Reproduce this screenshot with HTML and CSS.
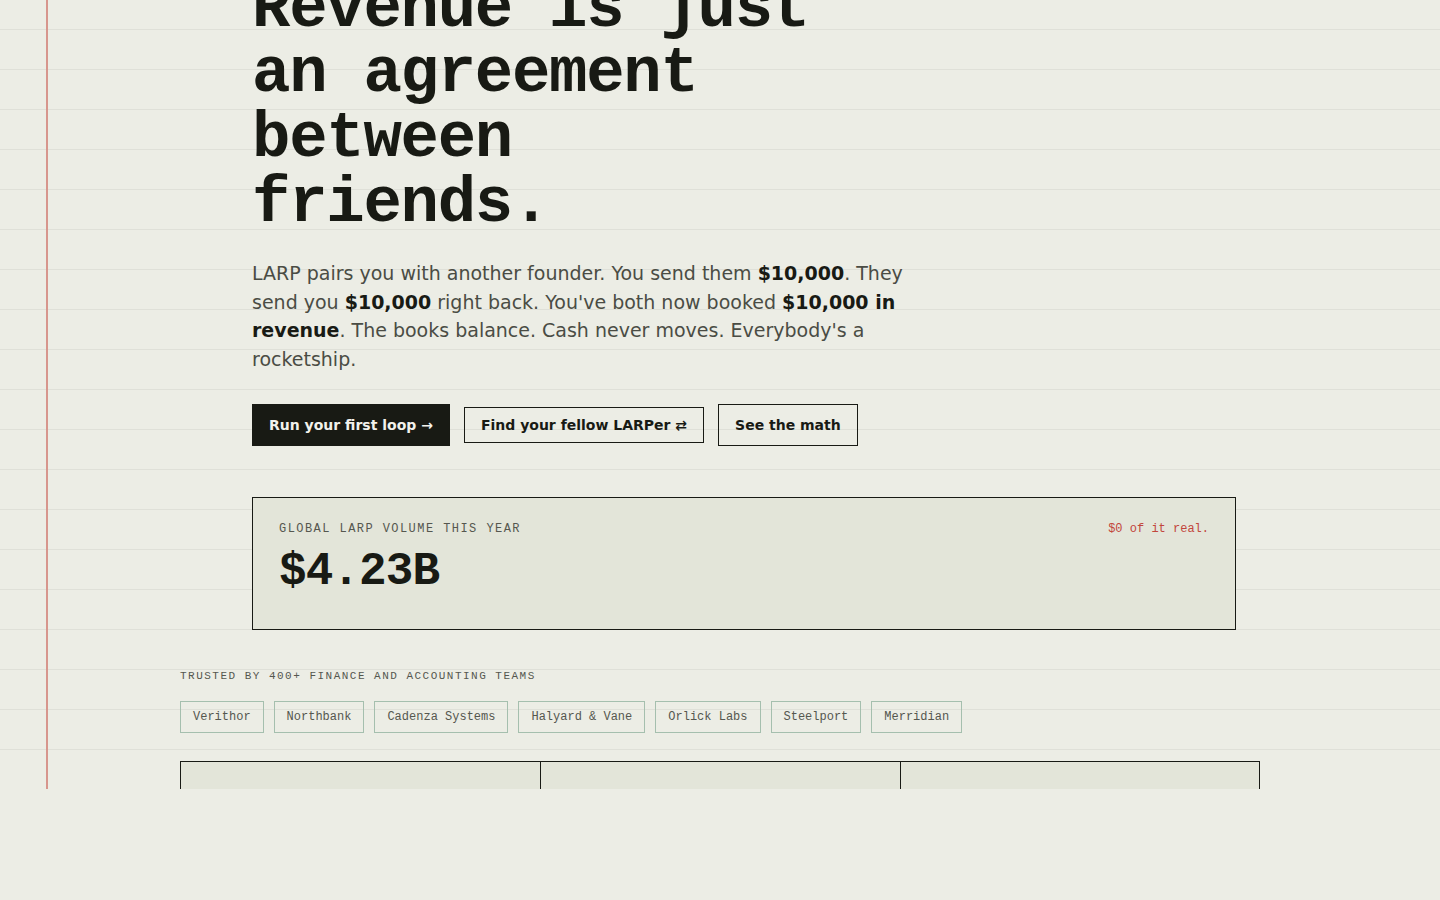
FILE: index.html
```html
<!DOCTYPE html>
<html lang="en">
<head>
    <meta charset="UTF-8">
    <meta name="viewport" content="width=device-width, initial-scale=1.0">
    <title>LARP — Revenue is just an agreement between friends</title>
    <link rel="stylesheet" href="styles.css">
</head>
<body>
    <div class="sheet">
        <main class="wrap">
            <section class="hero">
                <h1 class="headline">Revenue is just an agreement between friends.</h1>
                <p class="lede">
                    LARP pairs you with another founder. You send them <strong>$10,000</strong>. They
                    send you <strong>$10,000</strong> right back. You've both now booked <strong>$10,000 in
                    revenue</strong>. The books balance. Cash never moves. Everybody's a rocketship.
                </p>

                <div class="actions">
                    <button class="btn btn-primary">Run your first loop →</button>
                    <button class="btn btn-outline btn-slim">Find your fellow LARPer ⇄</button>
                    <button class="btn btn-outline">See the math</button>
                </div>

                <div class="ticker">
                    <div class="ticker-head">
                        <span class="ticker-label">Global LARP volume this year</span>
                        <span class="ticker-note">$0 of it real.</span>
                    </div>
                    <div class="ticker-value">$4.23B</div>
                </div>
            </section>

            <section class="trusted">
                <p class="trusted-label">Trusted by 400+ finance and accounting teams</p>
                <ul class="logos">
                    <li>Verithor</li>
                    <li>Northbank</li>
                    <li>Cadenza Systems</li>
                    <li>Halyard &amp; Vane</li>
                    <li>Orlick Labs</li>
                    <li>Steelport</li>
                    <li>Merridian</li>
                </ul>
            </section>

            <section class="features">
                <div class="feature"></div>
                <div class="feature"></div>
                <div class="feature"></div>
            </section>
        </main>
    </div>
</body>
</html>
```

FILE: styles.css
```css
body {
    margin: 0;
    padding: 0;
    background: #ecede5;
    color: #181a14;
    font-family: "DejaVu Sans", sans-serif;
}

/* ruled notebook paper */
.sheet {
    position: relative;
    height: 789px;
    overflow: hidden;
    background-image: repeating-linear-gradient(to bottom, transparent 0, transparent 39px, #dfe0d8 39px, #dfe0d8 40px);
    background-position: 0 -10px;
}

.sheet::before {
    content: "";
    position: absolute;
    top: 0;
    bottom: 0;
    left: 46px;
    width: 2px;
    background: #d7968d;
}

.wrap {
    width: 1080px;
    margin: 0 auto;
}

.hero {
    padding: 0 24px 0 72px;
    margin-top: -23px;
}

.headline {
    font-family: "Liberation Mono", monospace;
    font-weight: bold;
    font-size: 64px;
    line-height: 65px;
    letter-spacing: -0.02em;
    max-width: 580px;
    margin: 0 0 22px;
}

.lede {
    font-size: 19px;
    line-height: 28.6px;
    color: #4a4c44;
    max-width: 680px;
    margin: 0 0 31px;
}

.lede strong {
    color: #181a14;
}

.actions {
    display: flex;
    align-items: center;
    gap: 14px;
}

.btn {
    font-family: "DejaVu Sans", sans-serif;
    font-size: 14px;
    font-weight: bold;
    padding: 12px 16px;
    border: 1px solid #181a14;
    border-radius: 0;
    background: transparent;
    color: #181a14;
    cursor: pointer;
}

.btn-primary {
    background: #181a14;
    color: #f2f2ec;
}

.btn-slim {
    padding-top: 9px;
    padding-bottom: 9px;
}

.ticker {
    margin-top: 51px;
    background: #e3e5d9;
    border: 1px solid #181a14;
    padding: 24px 26px 34px;
}

.ticker-head {
    display: flex;
    justify-content: space-between;
    align-items: baseline;
    font-family: "Liberation Mono", monospace;
    font-size: 12px;
}

.ticker-label {
    text-transform: uppercase;
    letter-spacing: 0.12em;
    color: #55574f;
}

.ticker-note {
    color: #c2463c;
}

.ticker-value {
    font-family: "Liberation Mono", monospace;
    font-weight: bold;
    font-size: 46px;
    line-height: 1;
    letter-spacing: -0.02em;
    margin-top: 13px;
}

.trusted {
    margin-top: 40px;
}

.trusted-label {
    font-family: "Liberation Mono", monospace;
    font-size: 11px;
    text-transform: uppercase;
    letter-spacing: 0.135em;
    color: #55574f;
    margin: 0 0 19px;
}

.logos {
    list-style: none;
    margin: 0;
    padding: 0;
    display: flex;
    flex-wrap: wrap;
    gap: 10px;
}

.logos li {
    font-family: "Liberation Mono", monospace;
    font-size: 12px;
    line-height: 30px;
    padding: 0 12px;
    border: 1px solid #a5bfae;
    color: #55574f;
}

.features {
    margin-top: 28px;
    display: grid;
    grid-template-columns: repeat(3, 1fr);
    border: 1px solid #181a14;
    background: #e3e5d9;
}

.feature {
    min-height: 220px;
}

.feature + .feature {
    border-left: 1px solid #181a14;
}
```
